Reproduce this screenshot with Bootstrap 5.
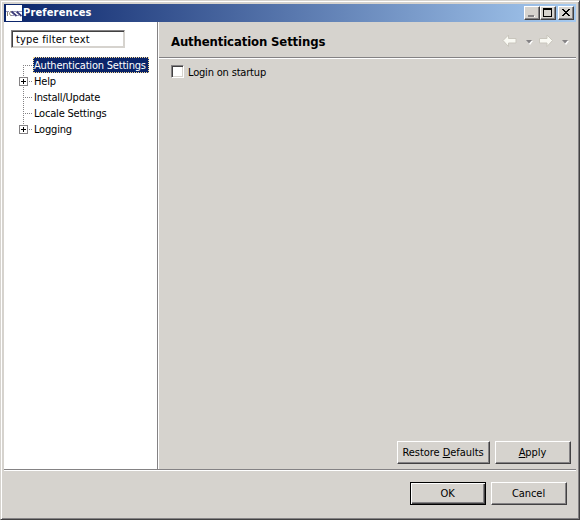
<!DOCTYPE html>
<html lang="en">
<head>
<meta charset="utf-8">
<title>Preferences</title>
<link rel="stylesheet" href="https://cdn.jsdelivr.net/npm/bootstrap@5.3.0/dist/css/bootstrap.min.css">
<style>
body{font:11px/16px "DejaVu Sans Condensed","DejaVu Sans",sans-serif;font-stretch:condensed;color:#000;background:#d6d3ce;overflow:hidden}
.window{width:580px;height:520px;background:#d6d3ce;border:1px solid;border-color:#d6d3ce #424142 #424142 #d6d3ce;box-shadow:inset 1px 1px #fff,inset -1px -1px #848284;padding:3px}
.titlebar{height:18px;background:linear-gradient(90deg,#0a246a,#a6caf0);padding:0 2px;color:#fff;flex:none}
.caption{font-weight:700;font-size:11px;line-height:18px;margin-left:1px;letter-spacing:.15px}
.capbtn{width:16px;height:14px;background:#d6d3ce;border:1px solid;border-color:#fff #424142 #424142 #fff;box-shadow:inset -1px -1px #848284;padding:0;display:block}
.capbtn svg,.tools svg,.appicon{display:block}
.side{width:154px;background:#fff;border-right:1px solid #848284;padding:8px 0 0 7px}
.filter{width:114px;height:18px;border:1px solid;border-color:#848284 #d6d3ce #d6d3ce #848284;box-shadow:inset 1px 1px #424142,inset -1px -1px #d6d3ce;border-radius:0;padding:1px 0 0 4px;font-size:11px;line-height:15px;letter-spacing:.18px;color:#000;background:#fff;outline:0;display:block}
.tree{margin:9px 0 0 8px}
.node{height:16px}
.node svg{display:block;width:14px;height:16px;flex:none}
.node span{padding:1px 0 0 1px;line-height:16px;letter-spacing:-.2px;white-space:nowrap}
.node .picked{width:116px;height:16px;background:#0a246a;color:#fff;outline:1px dotted #f7db95;outline-offset:-1px}
.page{border-left:1px solid #fff}
.head{height:36px;border-bottom:1px solid #848284;box-shadow:0 1px #fff;padding:0 6px 0 12px}
.head h1{font-size:13px;line-height:35px;font-weight:700;letter-spacing:-.13px;margin:0;padding-top:2px}
.check{width:13px;height:13px;margin:0;border:1px solid;border-color:#848284 #fff #fff #848284;box-shadow:inset 1px 1px #424142,inset -1px -1px #d6d3ce;background:#fff;border-radius:0;appearance:none}
.login{padding:7px 0 0 12px;gap:4px;letter-spacing:-.18px}
.login span{line-height:16px}
.actions{gap:5px;padding:0 5px 5px 0}
.push{width:76px;height:23px;padding:0 1px 0 0;font-size:11px;line-height:20px;letter-spacing:-.05px;color:#000;background:#d6d3ce;border:1px solid;border-color:#fff #424142 #424142 #fff;border-radius:0;box-shadow:inset -1px -1px #848284}
.push.wide{width:93px}
.push.main{border-color:#000;box-shadow:inset 1px 1px #fff,inset -1px -1px #424142,inset -2px -2px #848284}
.foot{height:47px;border-top:1px solid #848284;box-shadow:inset 0 1px #fff;padding:12px 9px 0 0;gap:5px;flex:none}
.capbtn.shut{margin-left:2px}
</style>
<script src="https://cdn.jsdelivr.net/npm/bootstrap@5.3.0/dist/js/bootstrap.bundle.min.js"></script>
</head>
<body>
<div class="window d-flex flex-column">
  <header class="titlebar d-flex align-items-center">
    <svg class="appicon" width="16" height="16" viewBox="0 0 16 16"><path fill="#fff" d="M0 0h16v16H0z"/><g fill="none"><path stroke="#9694b6" d="M0 6.500h3M5 6.500h5M11 6.500h5M5 10.500h3M10 10.500h3"/><path stroke="#8a8275" d="M1.500 7v4M5.500 6.500h-1l-1 2 1 2h1"/><path stroke="#3c3b78" stroke-width="1.700" d="M5.500 6.500l5 4.500M10.500 6.500l5 4.500"/></g></svg>
    <span class="caption me-auto">Preferences</span>
    <button class="capbtn" aria-label="Minimize"><svg width="14" height="12" shape-rendering="crispEdges"><path fill="#848284" d="M3 8h6v2H3z"/><path fill="#fff" d="M4 10h6V9H9v1z"/></svg></button>
    <button class="capbtn" aria-label="Maximize"><svg width="14" height="12" shape-rendering="crispEdges"><path fill="#000" fill-rule="evenodd" d="M2 1h9v9H2zM3 3v6h7V3z"/></svg></button>
    <button class="capbtn shut" aria-label="Close"><svg width="14" height="12" shape-rendering="crispEdges"><path d="M3 2h2v1h1v1h2V3h1V2h2v1h-1v1H9v1H8v1h1v1h1v1h1v1H9V8H8V7H6v1H5v1H3V8h1V7h1V6h1V5H5V4H4V3H3z"/></svg></button>
  </header>
  <main class="d-flex flex-grow-1">
    <nav class="side">
      <input class="filter" value="type filter text" aria-label="Filter">
      <div class="tree">
        <div class="node d-flex"><svg><path d="M4.500 8v8M4 8.500h10" stroke="#848284" stroke-dasharray="1 1" shape-rendering="crispEdges"/></svg><span class="picked">Authentication Settings</span></div>
        <div class="node d-flex"><svg shape-rendering="crispEdges"><path d="M4.500 0v16M10 8.500h4" stroke="#848284" stroke-dasharray="1 1"/><path d="M.5 4.500h8v8h-8z" fill="#fff" stroke="#848284"/><path d="M2 8.500h5M4.500 6v5" stroke="#000"/></svg><span>Help</span></div>
        <div class="node d-flex"><svg><path d="M4.500 0v16M4 8.500h10" stroke="#848284" stroke-dasharray="1 1" shape-rendering="crispEdges"/></svg><span>Install/Update</span></div>
        <div class="node d-flex"><svg><path d="M4.500 0v16M4 8.500h10" stroke="#848284" stroke-dasharray="1 1" shape-rendering="crispEdges"/></svg><span>Locale Settings</span></div>
        <div class="node d-flex"><svg shape-rendering="crispEdges"><path d="M4.500 0v4M10 8.500h4" stroke="#848284" stroke-dasharray="1 1"/><path d="M.5 4.500h8v8h-8z" fill="#fff" stroke="#848284"/><path d="M2 8.500h5M4.500 6v5" stroke="#000"/></svg><span>Logging</span></div>
      </div>
    </nav>
    <section class="page flex-grow-1 d-flex flex-column">
      <div class="head d-flex justify-content-between">
        <h1>Authentication Settings</h1>
        <div class="tools">
          <svg width="68" height="36" viewBox="0 0 68 36"><g stroke="#c9c6bd" fill="#f9f9f3" stroke-linejoin="round"><path d="M1 18.500l5.500-5.500v3.500h7.500v4.500h-7.500v3.500z"/><path d="M50.500 18.500l-5.500-5.500v3.500h-7.500v4.500h7.500v3.500z"/></g><path fill="#fff" d="M25 19h6l-3 4zM61 19h6l-3 4z"/><path fill="#848284" d="M24 18h6l-3 3.500zM60 18h6l-3 3.500z"/></svg>
        </div>
      </div>
      <label class="login d-flex"><input type="checkbox" class="check"><span>Login on startup</span></label>
      <div class="d-flex justify-content-end mt-auto actions">
        <button class="push wide">Restore <u>D</u>efaults</button>
        <button class="push"><u>A</u>pply</button>
      </div>
    </section>
  </main>
  <footer class="foot d-flex justify-content-end">
    <button class="push main">OK</button>
    <button class="push">Cancel</button>
  </footer>
</div>
</body>
</html>
